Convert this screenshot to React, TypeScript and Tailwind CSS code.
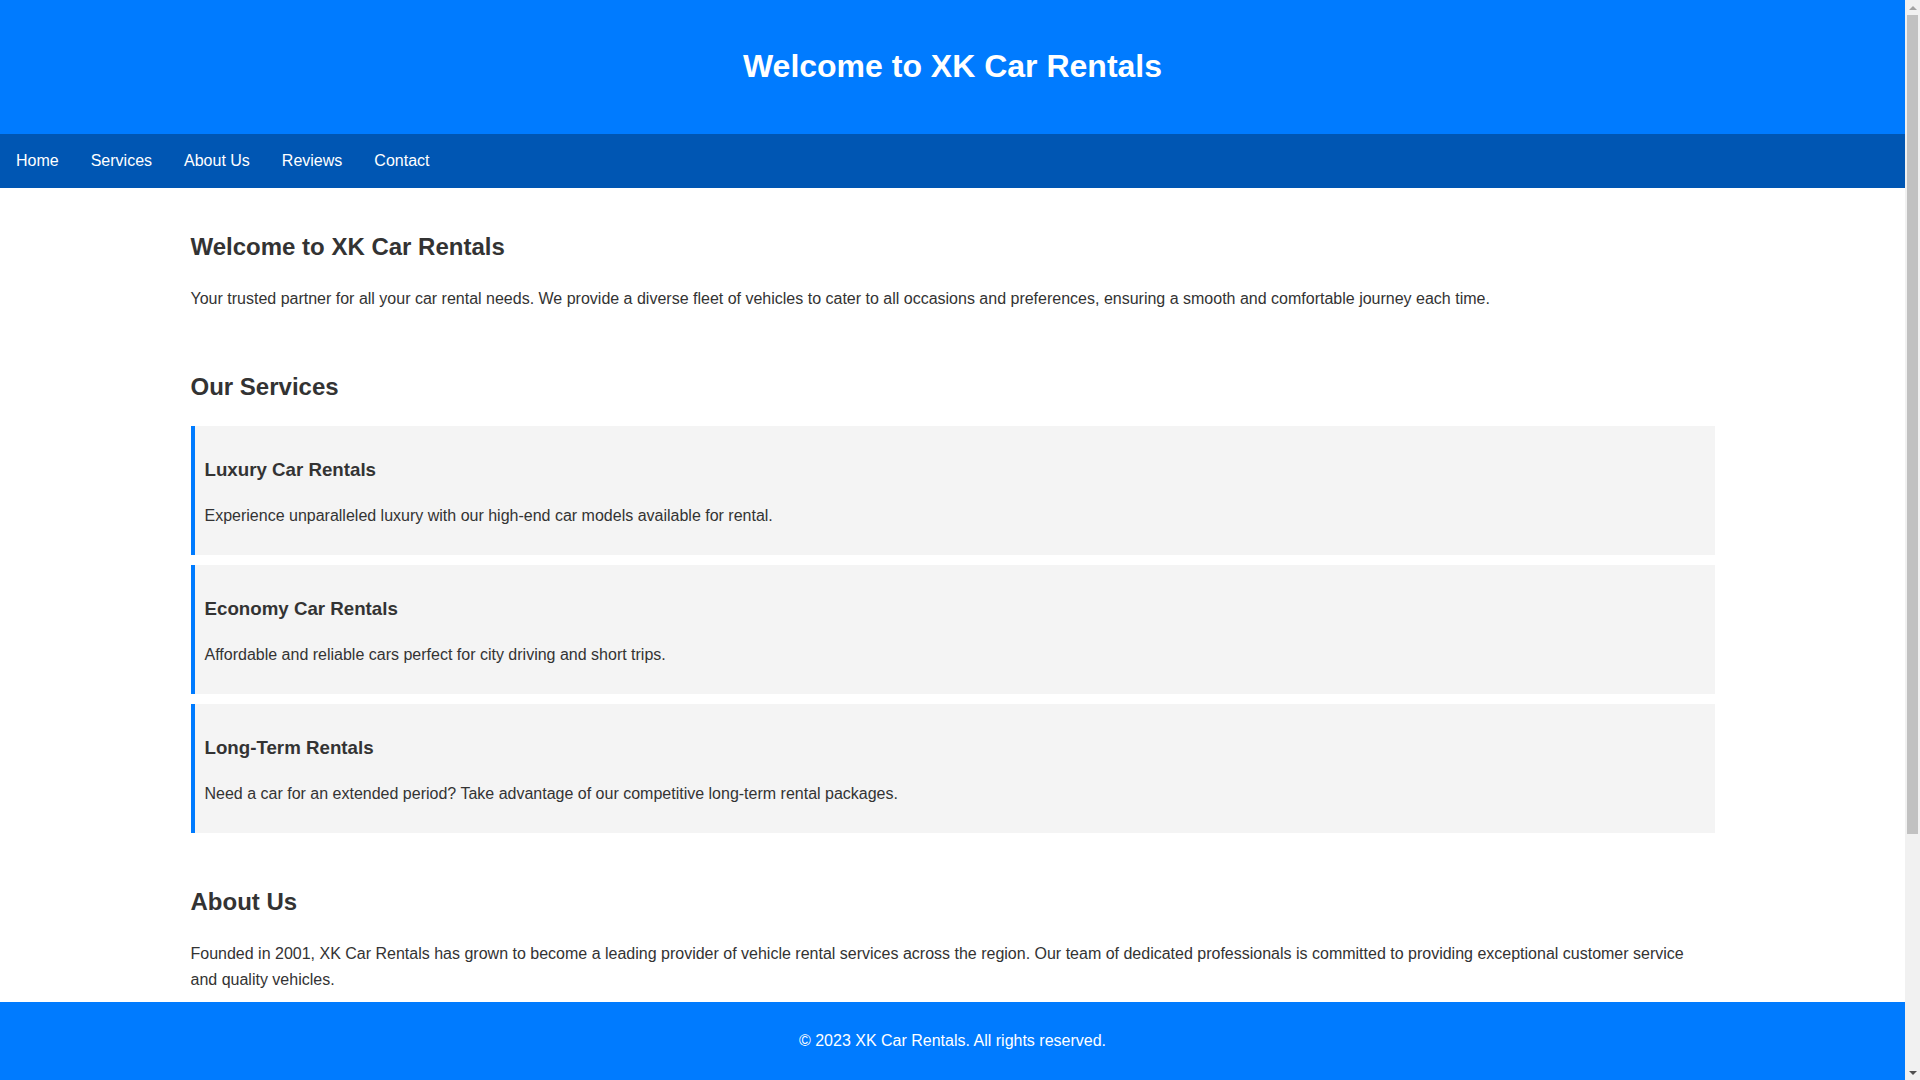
const NAV_LINKS = ["Home", "Services", "About Us", "Reviews", "Contact"];

const SERVICES = [
  {
    title: "Luxury Car Rentals",
    text: "Experience unparalleled luxury with our high-end car models available for rental.",
  },
  {
    title: "Economy Car Rentals",
    text: "Affordable and reliable cars perfect for city driving and short trips.",
  },
  {
    title: "Long-Term Rentals",
    text: "Need a car for an extended period? Take advantage of our competitive long-term rental packages.",
  },
];

const REVIEWS = [
  {
    quote: "Great service and a spotless car. Pickup took less than ten minutes.",
    author: "Sarah M.",
  },
  {
    quote: "The long-term package saved me a lot of money during my relocation.",
    author: "James T.",
  },
];

const H2 = "my-[20px] text-[24px] font-bold leading-[38.4px]";
const P = "mb-[16px] text-[16px] leading-[25.6px]";

function ServiceCard({ title, text }: { title: string; text: string }) {
  return (
    <div className="mb-[10px] border-l-4 border-[#007bff] bg-[#f4f4f4] p-[10px]">
      <h3 className="my-[18.72px] text-[18.72px] font-bold leading-[29.95px]">
        {title}
      </h3>
      <p className={P}>{text}</p>
    </div>
  );
}

// the window's scrollbar, which the screenshot keeps
function Scrollbar() {
  return (
    <div className="fixed right-0 top-0 flex h-screen w-[15px] flex-col bg-[#f1f1f1]">
      <div className="flex h-[15px] items-center justify-center">
        <div className="h-0 w-0 border-x-[4px] border-b-[4px] border-x-transparent border-b-[#a3a3a3]" />
      </div>
      <div className="flex-1 px-[2px]">
        <div className="h-[78%] rounded-none bg-[#c1c1c1]" />
      </div>
      <div className="flex h-[15px] items-center justify-center">
        <div className="h-0 w-0 border-x-[4px] border-t-[4px] border-x-transparent border-t-[#505050]" />
      </div>
    </div>
  );
}

export default function App() {
  return (
    <div className="min-h-screen bg-white font-['Liberation_Sans',Arial,sans-serif] text-[16px] leading-[25.6px] text-[#333]">
      <div className="mr-[15px] pb-[100px]">
        {/* Header */}
        <header className="bg-[#007bff] p-[20px] text-center text-white">
          <h1 className="my-[21.44px] text-[32px] font-bold leading-[51.2px]">
            Welcome to XK Car Rentals
          </h1>
        </header>

        {/* Nav */}
        <nav className="flex bg-[#0056b3]">
          {NAV_LINKS.map((link) => (
            <a
              key={link}
              href={`#${link.toLowerCase().replace(" ", "-")}`}
              className="block px-[16px] py-[14px] leading-[25.6px] text-white no-underline hover:bg-[#004494]"
            >
              {link}
            </a>
          ))}
        </nav>

        <main className="mx-auto w-[80%] pt-[20px]">
          <section id="home" className="pb-[20px]">
            <h2 className={H2}>Welcome to XK Car Rentals</h2>
            <p className={P}>
              Your trusted partner for all your car rental needs. We provide a diverse fleet of
              vehicles to cater to all occasions and preferences, ensuring a smooth and
              comfortable journey each time.
            </p>
          </section>

          <section id="services" className="pb-[20px]">
            <h2 className={H2}>Our Services</h2>
            {SERVICES.map((s) => (
              <ServiceCard key={s.title} title={s.title} text={s.text} />
            ))}
          </section>

          <section id="about-us" className="pb-[20px]">
            <h2 className={H2}>About Us</h2>
            <p className={P}>
              Founded in 2001, XK Car Rentals has grown to become a leading provider of vehicle
              rental services across the region. Our team of dedicated professionals is
              committed to providing exceptional customer service and quality vehicles.
            </p>
          </section>

          <section id="reviews" className="pb-[20px]">
            <h2 className={H2}>Customer Reviews</h2>
            {REVIEWS.map((r) => (
              <div key={r.author} className="mb-[10px] border-l-4 border-[#007bff] bg-[#f4f4f4] p-[10px]">
                <p className={P}>"{r.quote}"</p>
                <p className={`${P} font-bold`}>- {r.author}</p>
              </div>
            ))}
          </section>

          <section id="contact" className="pb-[20px]">
            <h2 className={H2}>Contact Us</h2>
            <p className={P}>Phone: (555) 123-4567</p>
            <p className={P}>Email: info@xkcarrentals.com</p>
          </section>
        </main>
      </div>

      {/* Footer */}
      <footer className="fixed bottom-0 left-0 right-[15px] bg-[#007bff] p-[10px] text-center text-white">
        <p className="my-[16px] leading-[25.6px]">© 2023 XK Car Rentals. All rights reserved.</p>
      </footer>

      <Scrollbar />
    </div>
  );
}
